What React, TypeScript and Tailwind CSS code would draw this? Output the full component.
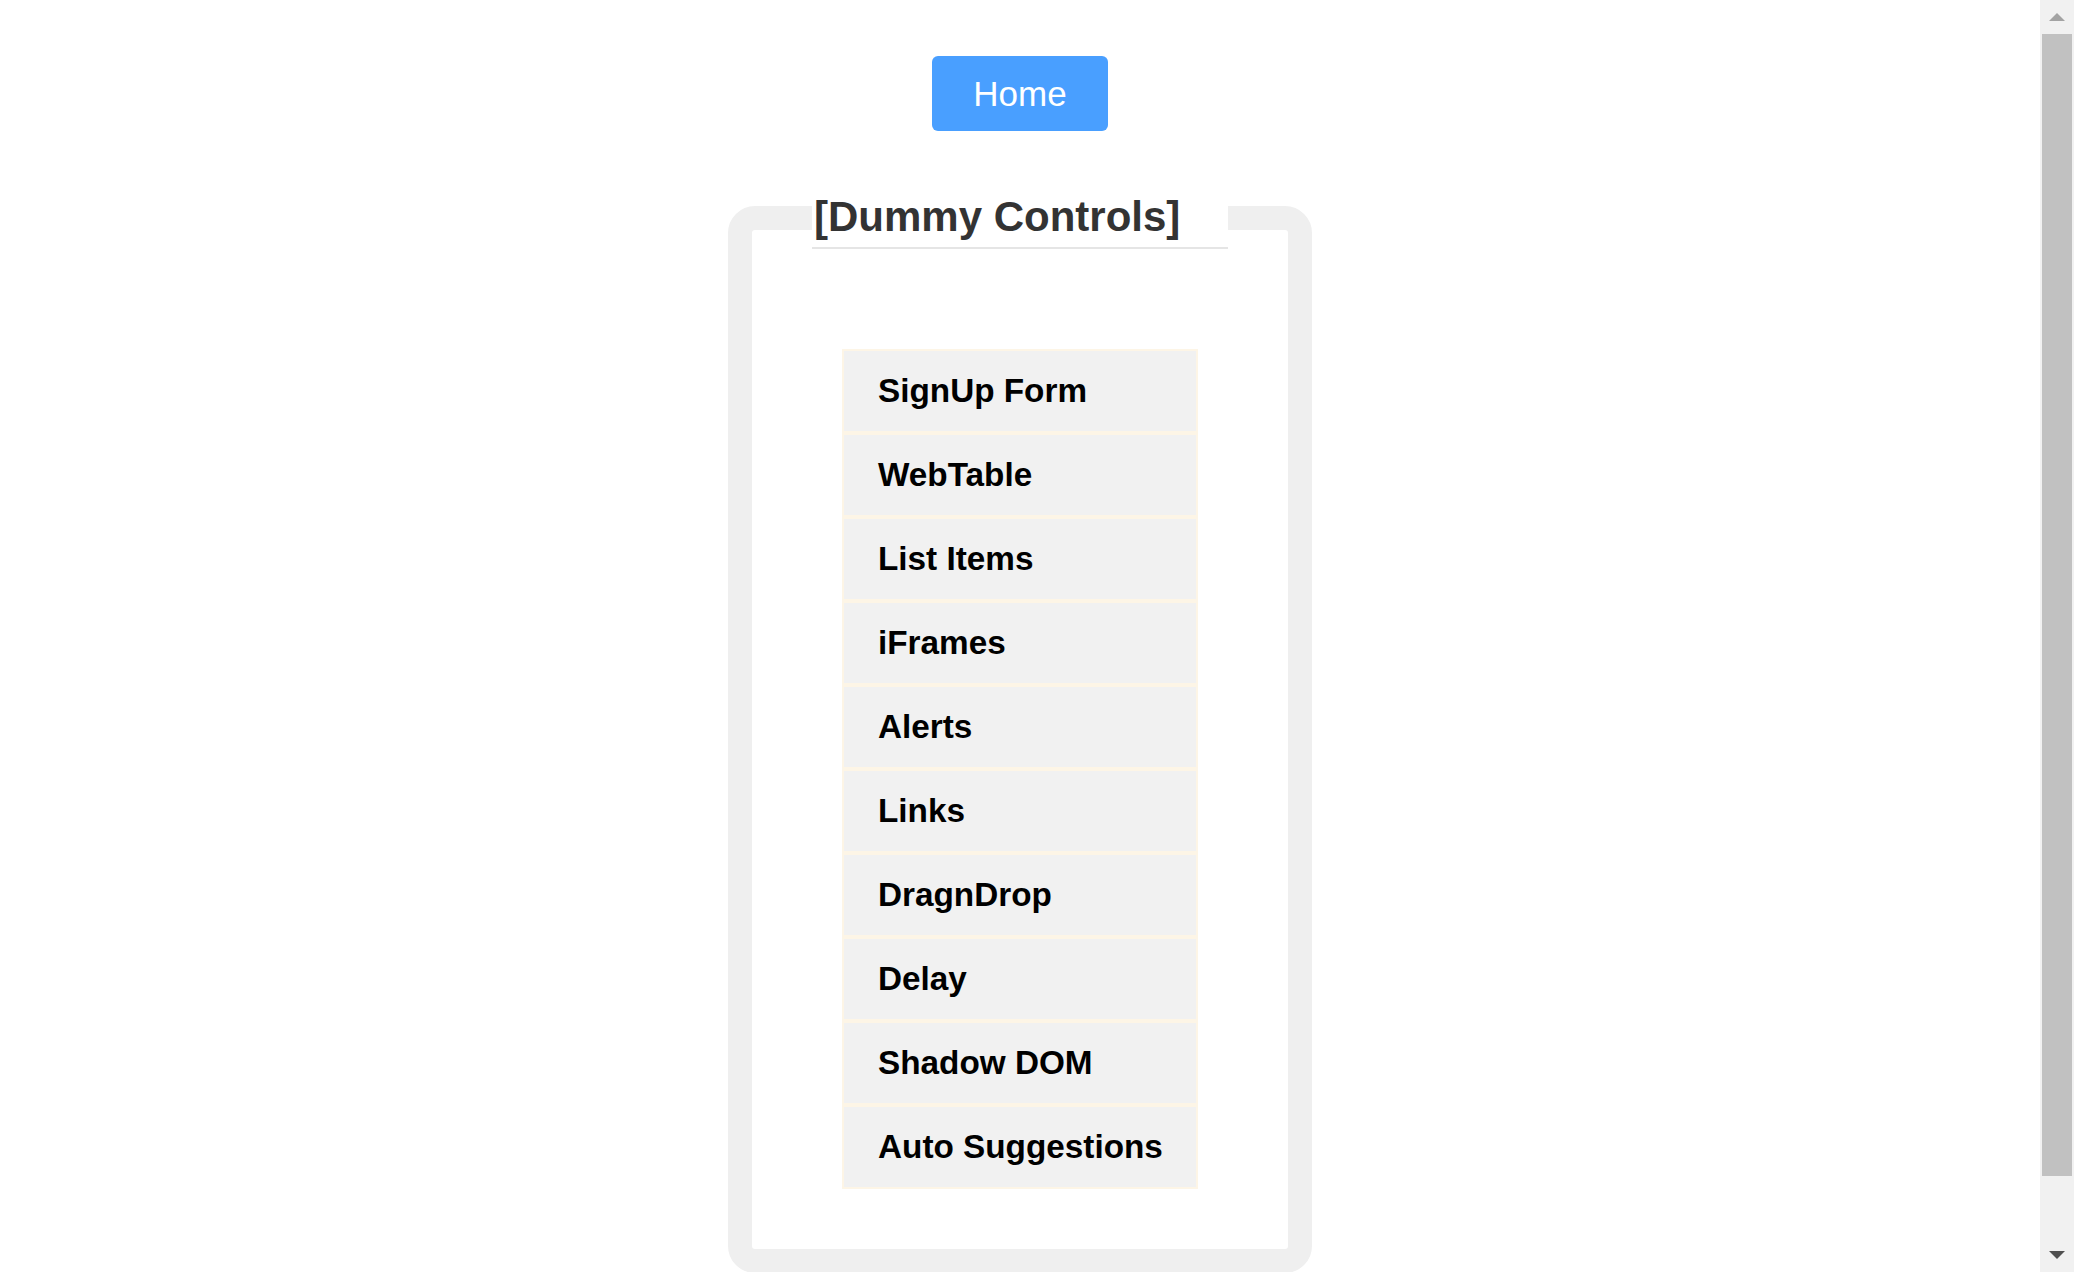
import React from 'react';

const links = [
  'SignUp Form',
  'WebTable',
  'List Items',
  'iFrames',
  'Alerts',
  'Links',
  'DragnDrop',
  'Delay',
  'Shadow DOM',
  'Auto Suggestions',
];

function Scrollbar() {
  // window scrollbar as it shows in the screenshot
  return (
    <div className="fixed top-0 right-0 h-screen w-[34px] bg-[#f1f1f1] flex flex-col items-center">
      <div className="h-[34px] w-full flex items-center justify-center">
        <svg width="16" height="8" viewBox="0 0 16 8">
          <polygon points="8,0 16,8 0,8" fill="#a3a3a3" />
        </svg>
      </div>
      <div className="w-[30px] h-[1142px] bg-[#c1c1c1]" />
      <div className="flex-1" />
      <div className="h-[34px] w-full flex items-center justify-center">
        <svg width="16" height="8" viewBox="0 0 16 8">
          <polygon points="0,0 16,0 8,8" fill="#505050" />
        </svg>
      </div>
    </div>
  );
}

export default function App() {
  return (
    <div className="min-h-screen bg-white font-['Liberation_Sans',Arial,sans-serif]">
      <div className="mr-[34px] flex flex-col items-center pt-[56px] pb-[69px]">
        {/* Home button */}
        <button className="w-[176px] h-[75px] rounded-[6px] bg-[#499fff] text-white text-[35px] leading-none flex items-center justify-center">
          Home
        </button>

        {/* Controls box */}
        <fieldset className="mt-[56px] w-[584px] border-[24px] border-[#efefef] rounded-[27px] pt-[100px] pb-[60px]">
          <legend className="ml-[60px] w-[416px] pl-[2px] text-[42px] leading-[60px] font-bold text-[#333333] border-b-2 border-[#e5e5e5]">
            [Dummy Controls]
          </legend>
          <ul className="flex flex-col items-center">
            {links.map((name) => (
              <li
                key={name}
                className="w-[356px] h-[84px] border-2 border-[#fdf5e6] bg-[#f1f1f1] pl-[34px] flex items-center text-[33.3px] font-bold text-black"
              >
                {name}
              </li>
            ))}
          </ul>
        </fieldset>
      </div>
      <Scrollbar />
    </div>
  );
}
